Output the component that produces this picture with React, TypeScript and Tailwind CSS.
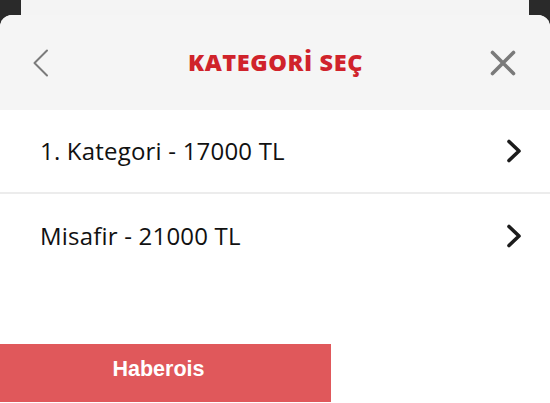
const categories = [
  { label: '1. Kategori - 17000 TL' },
  { label: 'Misafir - 21000 TL' },
]

function BackIcon() {
  return (
    <svg width="17" height="28" viewBox="0 0 17 28" fill="none" className="shrink-0">
      <path d="M15 1.5 L2.5 14 L15 26.5" stroke="#7b7b7b" strokeWidth="2" strokeLinecap="round" strokeLinejoin="round" />
    </svg>
  )
}

function CloseIcon() {
  return (
    <svg width="26" height="26" viewBox="0 0 26 26" fill="none" className="shrink-0">
      <path d="M2.5 2.5 L23.5 23.5 M23.5 2.5 L2.5 23.5" stroke="#7a7a7a" strokeWidth="3.6" strokeLinecap="round" />
    </svg>
  )
}

function NextIcon() {
  return (
    <svg width="16" height="24" viewBox="0 0 16 24" fill="none" className="shrink-0">
      <path d="M3 2.5 L13 12 L3 21.5" stroke="#1c1c1c" strokeWidth="3.6" strokeLinecap="round" strokeLinejoin="round" />
    </svg>
  )
}

export default function App() {
  return (
    <div className="w-[550px] h-[403px] bg-[#2a2a2a] overflow-hidden flex flex-col" style={{ fontFamily: '"Open Sans", "Noto Sans", sans-serif' }}>
      {/* arkadaki kart */}
      <div className="mx-[21px] h-[15px] shrink-0 bg-[#f4f4f4]" />
      <div className="flex-1 flex flex-col bg-white rounded-t-[12px] overflow-hidden">
        <div className="h-[95px] shrink-0 bg-[#f5f5f5] flex items-center justify-between pl-[32px] pr-[34px]">
          <BackIcon />
          <h1 className="text-[23.5px] font-extrabold tracking-[0.6px] text-[#d0232b] ml-[12px]">KATEGORİ SEÇ</h1>
          <CloseIcon />
        </div>
        {categories.map((c, i) => (
          <div
            key={i}
            className={`h-[84px] shrink-0 flex items-center justify-between pl-[40px] pr-[28px] ${i === 0 ? 'border-b-2 border-[#ececec]' : ''}`}
          >
            <span className="text-[24px] text-[#111] tracking-[0.2px] [font-variant-ligatures:none]">{c.label}</span>
            <NextIcon />
          </div>
        ))}
        <div className="flex-1" />
        <div className="w-[331px] h-[58px] mb-[1px] bg-[#e0585b] flex items-center justify-center pr-[14px]">
          <span className="text-[21.5px] font-bold text-white pb-[7px]" style={{ fontFamily: '"Liberation Sans", Arial, sans-serif' }}>
            Haberois
          </span>
        </div>
      </div>
    </div>
  )
}
